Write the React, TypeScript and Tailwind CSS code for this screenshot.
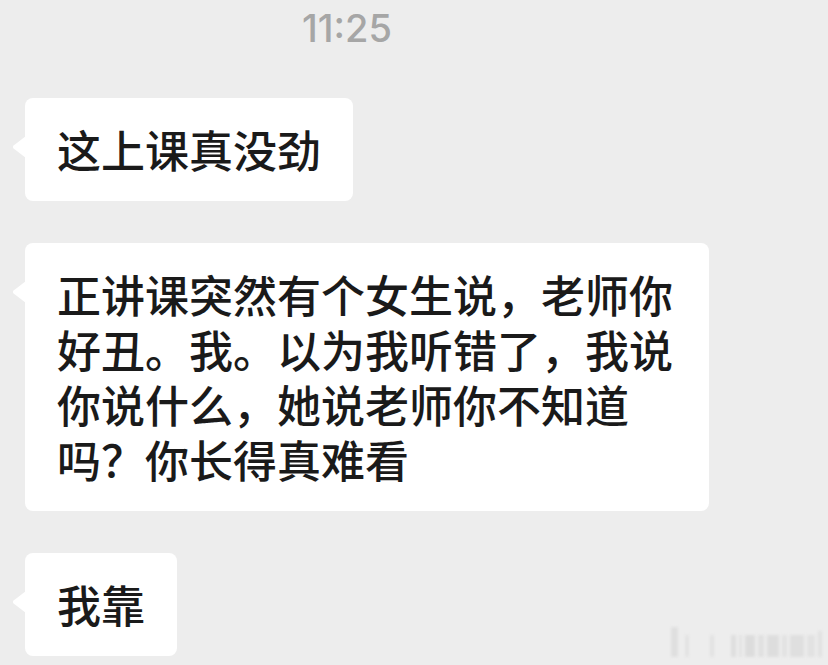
import React from 'react';

const cjk = { fontFamily: '"Noto Sans CJK SC", "Noto Sans", sans-serif' };

const messages = [
  '这上课真没劲',
  '正讲课突然有个女生说，老师你好丑。我。以为我听错了，我说你说什么，她说老师你不知道吗？你长得真难看',
  '我靠',
];

const Bubble = ({ text }: { text: string }) => (
  <div className="relative self-start rounded-lg bg-white px-8 py-6">
    {/* left tail */}
    <svg
      className="absolute left-[-13px] top-[38px]"
      width="14"
      height="22"
      viewBox="0 0 14 22"
    >
      <path d="M14 0 L1.6 9.4 Q0 11 1.6 12.6 L14 22 Z" fill="#ffffff" />
    </svg>
    <p
      className="max-w-[620px] text-[44px] font-medium leading-[55px] text-[#1a1a1a]"
      style={cjk}
    >
      {text}
    </p>
  </div>
);

// faint blurred mark in the corner
const Watermark = () => (
  <div className="absolute bottom-[8px] right-[6px] flex items-end gap-[3px] opacity-60 blur-[1.5px]">
    <div className="mr-[4px] h-[30px] w-[7px] bg-[#d6d6d6]" />
    <div className="mr-[18px] h-[22px] w-[4px] bg-[#dcdcdc]" />
    <div className="mr-[14px] h-[22px] w-[4px] bg-[#dadada]" />
    <div className="h-[22px] w-[5px] bg-[#d4d4d4]" />
    <div className="h-[22px] w-[3px] bg-[#dadada]" />
    <div className="h-[22px] w-[10px] bg-[#d2d2d2]" />
    <div className="h-[22px] w-[6px] bg-[#d8d8d8]" />
    <div className="h-[22px] w-[12px] bg-[#d4d4d4]" />
    <div className="h-[22px] w-[5px] bg-[#dadada]" />
    <div className="h-[22px] w-[14px] bg-[#d6d6d6]" />
    <div className="h-[22px] w-[8px] bg-[#dbdbdb]" />
    <div className="h-[26px] w-[4px] bg-[#d8d8d8]" />
  </div>
);

const App = () => {
  return (
    <div className="relative h-[665px] w-[828px] overflow-hidden bg-[#ededed]">
      <div className="h-[47px] pl-[302px] pt-[10px]">
        <span
          className="block text-[38px] leading-[37px] font-medium text-[#a6a6a6]"
          style={{ fontFamily: 'Inter, "Liberation Sans", sans-serif' }}
        >
          11:25
        </span>
      </div>

      <div className="mt-[51px] flex flex-col gap-[42px] pl-[25px]">
        {messages.map((m, i) => (
          <Bubble key={i} text={m} />
        ))}
      </div>

      <Watermark />
    </div>
  );
};

export default App;
